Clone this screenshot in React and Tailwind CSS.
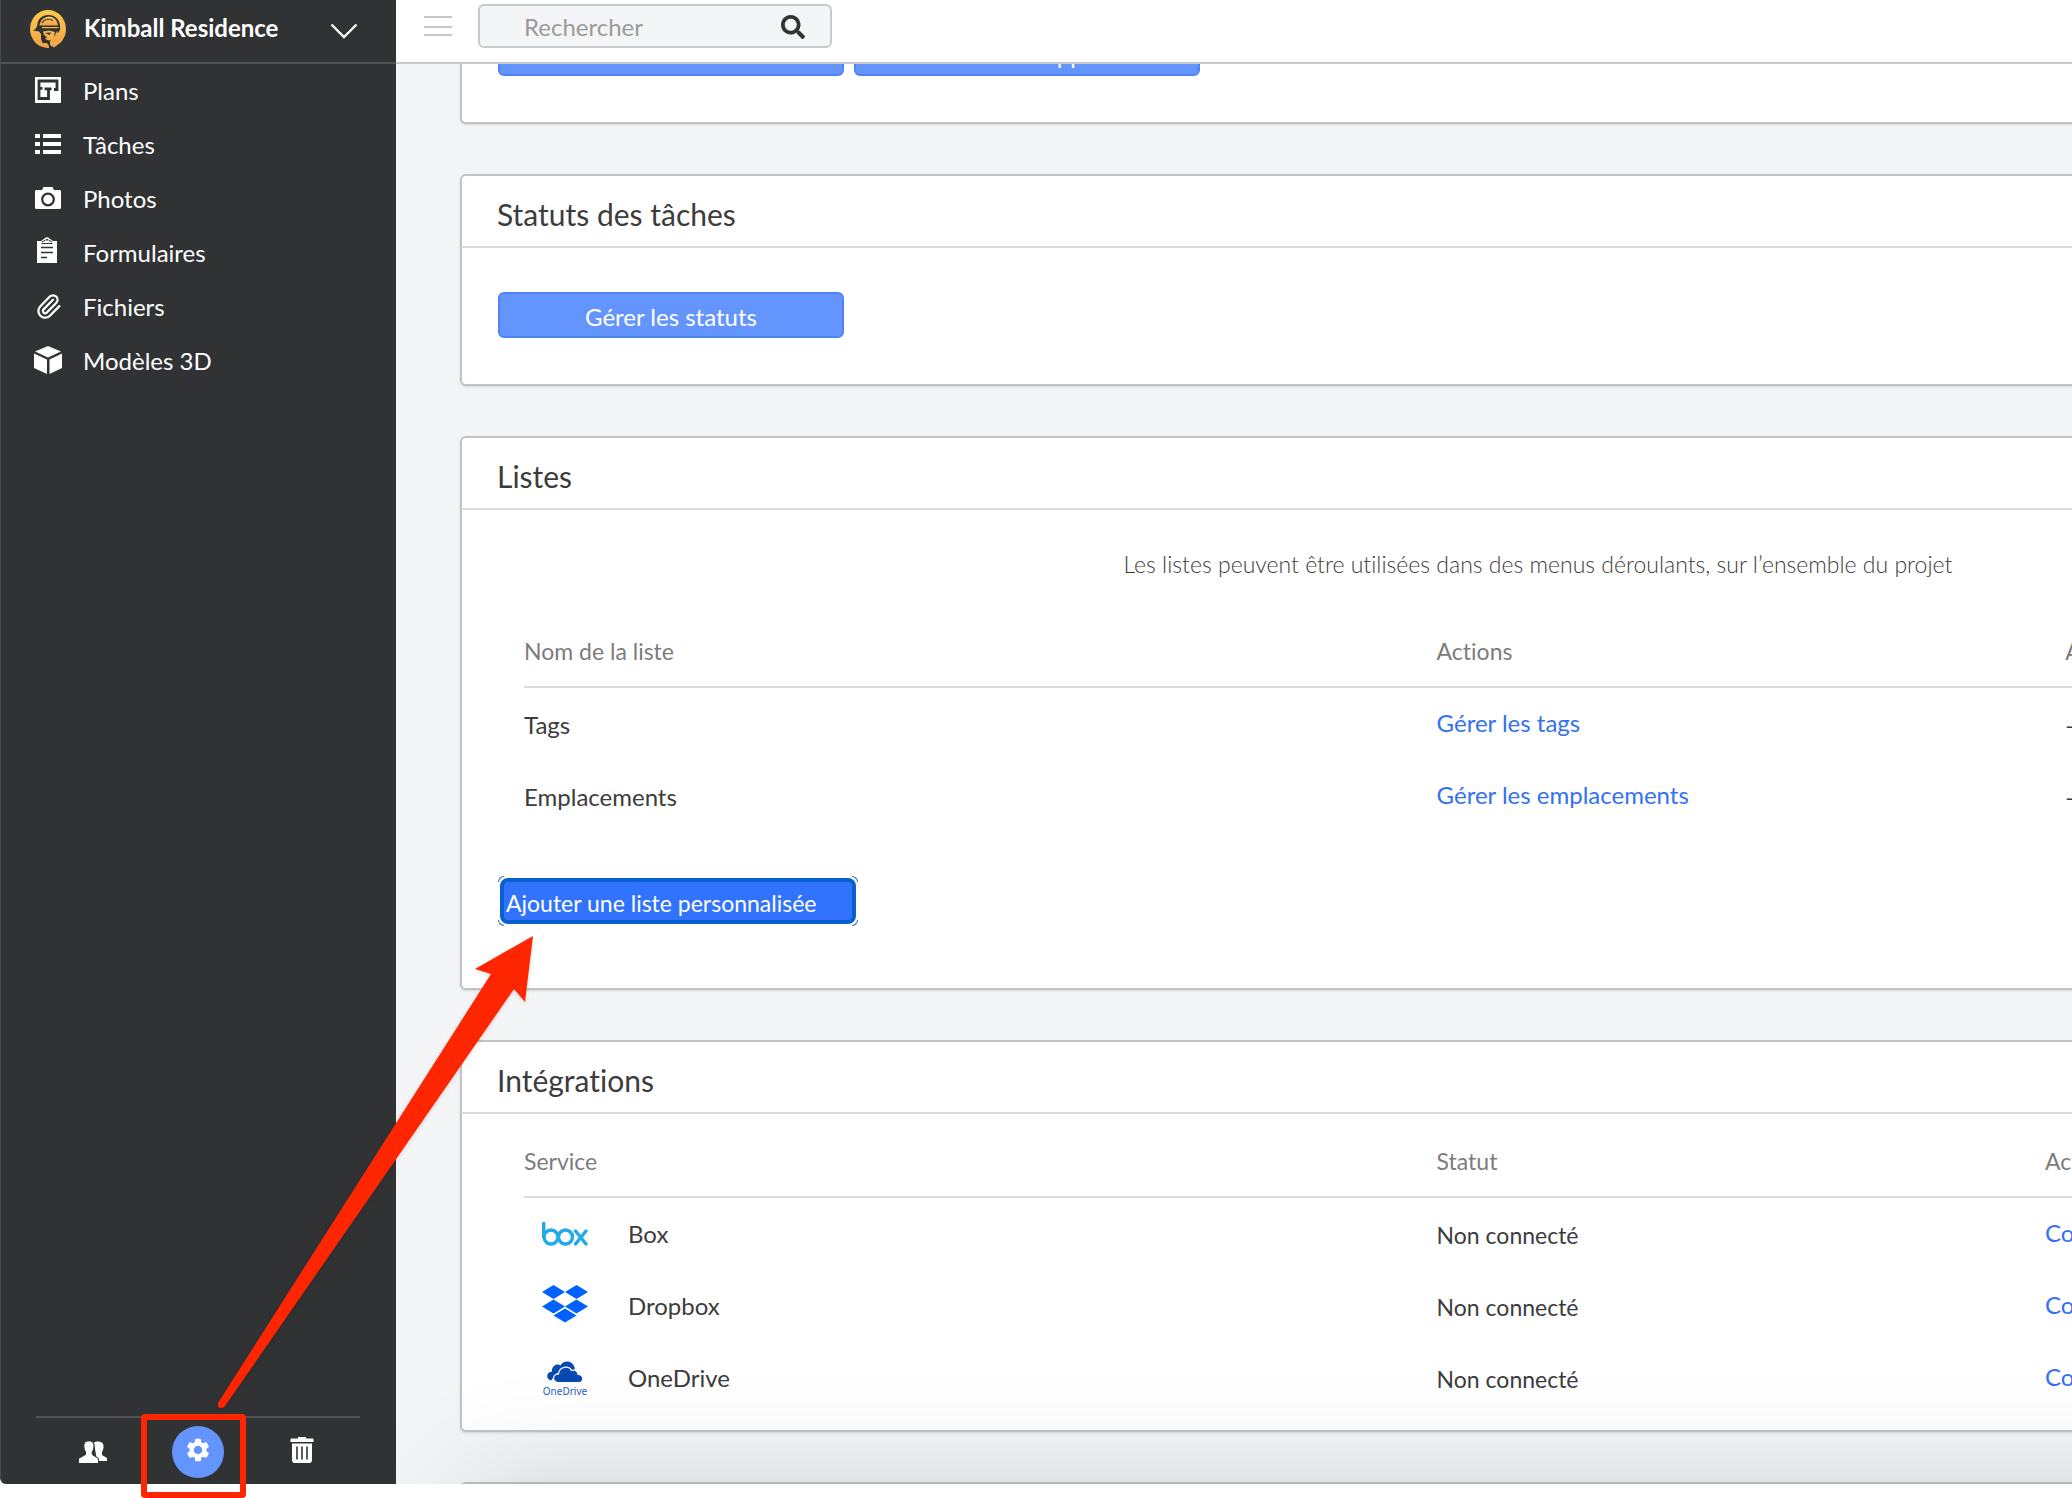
import { Paperclip } from "lucide-react";
import { FaSearch } from "react-icons/fa";
import { MdSettings } from "react-icons/md";

const navItems = [
  { label: "Plans", icon: PlansIcon },
  { label: "Tâches", icon: TasksIcon },
  { label: "Photos", icon: CameraIcon },
  { label: "Formulaires", icon: ClipboardIcon },
  { label: "Fichiers", icon: PaperclipIcon },
  { label: "Modèles 3D", icon: CubeIcon },
];

const lists = [
  { name: "Tags", action: "Gérer les tags" },
  { name: "Emplacements", action: "Gérer les emplacements" },
];

const services = [
  { name: "Box", logo: BoxLogo },
  { name: "Dropbox", logo: DropboxLogo },
  { name: "OneDrive", logo: OneDriveLogo },
];

function ProjectAvatar() {
  return (
    <svg viewBox="0 0 36 38" className="h-[38px] w-9" aria-hidden="true">
      <defs>
        <linearGradient id="avatar" x1="0" y1="0" x2="0" y2="1">
          <stop offset="0" stopColor="#fccb4f" />
          <stop offset="1" stopColor="#f3a048" />
        </linearGradient>
      </defs>
      <ellipse cx="18" cy="19" rx="18" ry="19" fill="url(#avatar)" />
      <path
        d="M3 20.5C6 19 7 17.500 7.500 13.500C8.500 8 13 5 18.500 5C25 5 29.500 9.500 30 15.500V20L28.500 22L26 28L31 35L28 38H19V36L17 33H12.500L11 29V24L9 21.500Z"
        fill="#313234"
      />
      <path d="M9.500 15.500C10 10.500 13 7.500 18.500 6.500C24 6.500 27.500 10.500 28 15.500Z" fill="url(#avatar)" />
      <path d="M12 13C13.500 9.500 18 8 23 10.500" fill="none" stroke="#313234" strokeWidth="1.200" />
      <path d="M12 17.600H28.500" stroke="#f8b84a" strokeWidth="1.200" />
      <path d="M13 21.500L19 20.500L25 22L23 29L19 30.500L15 29L17 27L14 25Z" fill="#f7b249" />
      <path d="M15 23L21 22.500L19.500 25Z" fill="#313234" />
      <path d="M20 31L25 25L27 21L29 27L30 33L24 37.500L20 35Z" fill="#f5a948" />
    </svg>
  );
}

function PlansIcon() {
  return (
    <svg viewBox="0 0 26 26" className="size-[26px]" aria-hidden="true">
      <rect width="26" height="26" fill="#fff" />
      <path
        d="M19 12.500H22V4H4V21.500H13.500V11.500M9.500 11.800H16.500M5 11.300H7.500"
        fill="none"
        stroke="#313234"
        strokeWidth="2.800"
      />
    </svg>
  );
}

function TasksIcon() {
  return (
    <svg viewBox="0 0 26 20" className="h-5 w-[26px]" fill="#fff" aria-hidden="true">
      <path d="M0 0h5v4H0zM8 0h18v4H8zM0 8h5v4H0zM8 8h18v4H8zM0 16h5v4H0zM8 16h18v4H8z" />
    </svg>
  );
}

function CameraIcon() {
  return (
    <svg viewBox="0 0 26 22" className="h-[22px] w-[26px]" aria-hidden="true">
      <path d="M1 3H7L8.500 0H17.500L19 3H25L26 4V21L25 22H1L0 21V4Z" fill="#fff" />
      <circle cx="13" cy="12.500" r="5.800" fill="none" stroke="#313234" strokeWidth="2.200" />
    </svg>
  );
}

function ClipboardIcon() {
  return (
    <svg viewBox="0 0 20 26" className="mb-1 mr-[2px] h-[26px] w-5" aria-hidden="true">
      <path d="M0 4H4L7.500 1.500Q10 -1 12.500 1.500L16 4H20V26H0Z" fill="#fff" />
      <path d="M4.500 6.500H15.500M5 5L8.500 3M15 5L11.500 3" stroke="#313234" strokeWidth="1" />
      <circle cx="10" cy="2.800" r="1" fill="#313234" />
      <path d="M4 10.500H16M4 15.500H16M4 20.500H10" stroke="#313234" strokeWidth="1.400" />
    </svg>
  );
}

function PaperclipIcon() {
  return <Paperclip className="size-[27px] shrink-0" strokeWidth={2} aria-hidden="true" />;
}

function CubeIcon() {
  return (
    <svg viewBox="0 0 28 28" className="size-7" fill="#fff" aria-hidden="true">
      <path d="M14 0L27 5.500L14 11.500L1 5.500ZM0 7.500L13 13.500V28L0 22ZM28 7.500L15.500 13.500V28L28 22Z" />
    </svg>
  );
}

function PeopleIcon() {
  return (
    <svg viewBox="0 0 28 22" className="h-[22px] w-7" aria-hidden="true">
      <path d="M15 1.500C17 0 21 0 23.500 2C25 4 25 8 23 11V14L28 17V20H18Z" fill="#fff" />
      <path
        d="M6.500 11C4.500 8 4.500 3.500 5.500 1.800C7.500 -0.800 12.500 -0.800 14.200 1.800C15.500 3.500 15.200 8 13.200 11V13.500L19.500 17.500V22.500H-0.500V17.500L6.500 13.500Z"
        fill="#fff"
        stroke="#313234"
        strokeWidth="1"
      />
    </svg>
  );
}

function TrashIcon() {
  return (
    <svg viewBox="0 0 24 26" className="h-[26px] w-6" aria-hidden="true">
      <path d="M8 0H16V1.500H23Q24 2 23.500 5H.5Q0 2 1 1.500H8ZM2 6.500H22V24L20.500 26H3.500L2 24Z" fill="#fff" />
      <path d="M7 9.500V22.500M12 9.500V22.500M17 9.500V22.500" stroke="#313234" strokeWidth="1.600" />
    </svg>
  );
}

function BoxLogo() {
  return (
    <svg viewBox="0 0 46 24" className="h-6 w-[46px]" fill="none" stroke="#21a9e8" strokeWidth="3.400" aria-hidden="true">
      <path d="M1.700 1.500V15" strokeLinecap="round" />
      <circle cx="9" cy="15" r="7" />
      <circle cx="23.500" cy="15" r="7" />
      <path d="M33.500 9L44 22M44 9L33.500 22" strokeLinecap="round" />
    </svg>
  );
}

function DropboxLogo() {
  return (
    <svg viewBox="0 0 46 38" className="mb-1 h-[38px] w-[46px]" fill="#0061ff" aria-hidden="true">
      <path d="M11.500 0L23 7L11.500 14L0 7ZM34.500 0L46 7L34.500 14L23 7ZM11.500 14.500L23 21.500L11.500 28.500L0 21.500ZM34.500 14.500L46 21.500L34.500 28.500L23 21.500ZM23 23.500L34.500 30.500L23 37.500L11.500 30.500Z" />
    </svg>
  );
}

function OneDriveLogo() {
  return (
    <svg viewBox="0 0 46 35" className="h-[35px] w-[46px]" aria-hidden="true">
      <path d="M9 19.500C3.500 18 4 11 10 10.500C9.500 5 15 2 18.500 4.500C21 -1 30 -1 32.500 6L33 12H15Z" fill="#094ab2" />
      <path
        d="M16 21.500C9.500 21 10.500 13 16.500 13C17 5.500 27 4 29.500 9.500C33.500 8 36 11 36 13.500C42.500 14 42 21.500 37 21.500Z"
        fill="#094ab2"
        stroke="#fff"
        strokeWidth="1.200"
      />
      <text x="23" y="34" textAnchor="middle" fontSize="10" fontFamily="Noto Sans, sans-serif" fill="#2a5fc0">
        OneDrive
      </text>
    </svg>
  );
}

function Sidebar() {
  return (
    <aside className="flex w-[396px] shrink-0 flex-col rounded-bl-md border-l border-[#47484a] bg-[#313234] text-white">
      <button
        type="button"
        className="flex h-16 shrink-0 items-center border-b-2 border-[#505153] pr-[38px] pb-1 pl-[29px] text-left font-bold"
      >
        <ProjectAvatar />
        <span className="ml-[18px] flex-1 pb-[2px]">Kimball Residence</span>
        <svg viewBox="0 0 28 16" className="mt-1 h-4 w-7" aria-hidden="true">
          <path d="M1.500 1.500L14 14L26.500 1.500" fill="none" stroke="#fff" strokeWidth="2.400" />
        </svg>
      </button>

      <nav className="flex-1">
        {navItems.map(({ label, icon: Icon }) => (
          <a key={label} href="#" className="flex h-[54px] items-center pl-[33px]">
            <span className="flex w-7 justify-center pb-[2px]">
              <Icon />
            </span>
            <span className="ml-[21px]">{label}</span>
          </a>
        ))}
      </nav>

      <div className="mr-9 ml-[35px] flex h-[68px] items-start border-t-2 border-[#505153] pt-2">
        <button type="button" aria-label="Utilisateurs" className="flex h-[52px] w-[113px] items-center justify-center">
          <PeopleIcon />
        </button>
        <div className="relative mx-[23px]">
          <button
            type="button"
            aria-label="Paramètres"
            className="flex size-[52px] items-center justify-center rounded-full bg-[#6495fe] pb-1"
          >
            <MdSettings className="size-7" />
          </button>
          <span className="pointer-events-none absolute -top-3 -left-[31px] z-20 h-[84px] w-[105px] rounded-sm border-[6px] border-[#fe2600]" />
        </div>
        <button type="button" aria-label="Corbeille" className="flex h-[52px] w-[110px] items-center justify-center pb-1">
          <TrashIcon />
        </button>
      </div>
    </aside>
  );
}

function TopBar() {
  return (
    <header className="flex h-16 shrink-0 items-start border-b-2 border-[#c9c9c9] bg-white pt-1 pl-7">
      <button type="button" aria-label="Menu" className="mt-3">
        <svg viewBox="0 0 28 20" className="h-5 w-7" fill="#c8c8c8" aria-hidden="true">
          <path d="M0 0h28v2H0zM0 10h28v2H0zM0 18h28v2H0z" />
        </svg>
      </button>
      <label className="ml-[26px] flex h-11 w-[354px] items-center rounded-md border-2 border-[#c8c8c8] bg-[#f4f5f7] pt-[2px] pr-[25px] pl-11">
        <input
          type="search"
          aria-label="Rechercher"
          placeholder="Rechercher"
          className="min-w-0 flex-1 bg-transparent outline-none placeholder:text-[#9b9b9b]"
        />
        <FaSearch className="size-6 text-[#333]" />
      </label>
    </header>
  );
}

function Card({ title, children, className = "" }) {
  return (
    <section className={`shrink-0 rounded-md border-2 border-[#c3c3c5] bg-white shadow-sm ${className}`}>
      {title && (
        <h2 className="flex h-[72px] items-center border-b-2 border-[#dcdcde] pt-[6px] pl-[35px] text-3xl text-[#3c3c3c]">
          {title}
        </h2>
      )}
      {children}
    </section>
  );
}

function PrimaryButton({ children }) {
  return (
    <button
      type="button"
      className="h-[46px] w-[346px] rounded-md border-2 border-[#4d83f7] bg-[#6495fe] pt-1 text-white"
    >
      {children}
    </button>
  );
}

function HeadCell({ children, className = "" }) {
  return (
    <th className={`h-[72px] border-b-2 border-[#dcdcde] p-0 text-[23px] font-normal text-[#7c7c7c] ${className}`}>
      {children}
    </th>
  );
}

// little arcs that show at the corners of the focused button
function FocusCorners() {
  return (
    <>
      <span className="absolute -top-[6px] -left-[6px] size-[6px] rounded-tl-md border-t border-l border-[#3d63c9]" />
      <span className="absolute -top-[6px] -right-[6px] size-[6px] rounded-tr-md border-t border-r border-[#3d63c9]" />
      <span className="absolute -bottom-[6px] -left-[6px] size-[6px] rounded-bl-md border-b border-l border-[#3d63c9]" />
      <span className="absolute -right-[6px] -bottom-[6px] size-[6px] rounded-br-md border-r border-b border-[#3d63c9]" />
    </>
  );
}

export default function App() {
  return (
    <div className="h-screen overflow-hidden bg-white pb-[14px] font-[Lato,sans-serif] text-2xl text-[#3c3c3c] [font-variant-ligatures:none]">
      <div className="relative flex h-full">
        <Sidebar />

        <div className="flex min-w-0 flex-1 flex-col">
          <TopBar />
          <main className="relative flex-1 overflow-hidden bg-[#f4f5f7]">
            {/* settings are scrolled down, the first card is mostly under the top bar */}
            <div className="-mt-[34px] flex min-w-[2284px] flex-col gap-[50px] px-16">
              <Card className="flex gap-[10px] border-t-0 pb-[46px] pl-9">
                <PrimaryButton>Modifier les informations</PrimaryButton>
                <PrimaryButton>Créer un rapport</PrimaryButton>
              </Card>

              <Card title="Statuts des tâches">
                <div className="px-9 pt-11 pb-[46px]">
                  <PrimaryButton>Gérer les statuts</PrimaryButton>
                </div>
              </Card>

              <Card title="Listes">
                <p className="pt-[38px] text-center text-[23px] leading-8 font-light">
                  Les listes peuvent être utilisées dans des menus déroulants, sur l’ensemble du projet
                </p>
                <div className="mx-[62px] mt-9">
                  <table className="w-full table-fixed border-separate border-spacing-0 text-left">
                    <thead>
                      <tr>
                        <HeadCell className="w-[45%]">Nom de la liste</HeadCell>
                        <HeadCell className="w-[31%]">Actions</HeadCell>
                        <HeadCell>Application</HeadCell>
                      </tr>
                    </thead>
                    <tbody>
                      {lists.map((list) => (
                        <tr key={list.name} className="h-[72px]">
                          <td className="p-0 pt-[2px]">{list.name}</td>
                          <td className="p-0 pb-[2px]">
                            <a href="#" className="text-[#3371f2]">
                              {list.action}
                            </a>
                          </td>
                          <td className="p-0 pt-[2px]">—</td>
                        </tr>
                      ))}
                    </tbody>
                  </table>
                </div>
                <button
                  type="button"
                  className="relative mt-[46px] mb-16 ml-[38px] block h-[46px] w-[356px] rounded-lg border-4 border-[#085fd0] bg-[#3273fe] pt-[5px] pl-[2px] text-left text-[23px] text-white"
                >
                  Ajouter une liste personnalisée
                  <FocusCorners />
                </button>
              </Card>

              <Card title="Intégrations">
                <div className="mx-[62px] pt-3 pb-4">
                  <table className="w-full table-fixed border-separate border-spacing-0 text-left">
                    <thead>
                      <tr>
                        <HeadCell className="w-[45%]">Service</HeadCell>
                        <HeadCell className="w-[30%]">Statut</HeadCell>
                        <HeadCell>Actions</HeadCell>
                      </tr>
                    </thead>
                    <tbody>
                      {services.map(({ name, logo: Logo }) => (
                        <tr key={name} className="h-[72px]">
                          <td className="p-0">
                            <span className="flex items-center gap-10 pl-[18px]">
                              <Logo />
                              {name}
                            </span>
                          </td>
                          <td className="p-0 pt-[2px] text-[23px]">Non connecté</td>
                          <td className="p-0 pb-[2px]">
                            <a href="#" className="text-[#3371f2]">
                              Connecter
                            </a>
                          </td>
                        </tr>
                      ))}
                    </tbody>
                  </table>
                </div>
              </Card>

              <Card className="h-40" />
            </div>
            <div className="pointer-events-none absolute -right-40 -bottom-80 left-16 h-80 shadow-[0_0_120px_rgba(0,0,0,0.14)]" />
          </main>
        </div>

        {/* pointer from the settings button to the add-list button */}
        <svg
          viewBox="0 0 330 480"
          className="pointer-events-none absolute top-[932px] left-[212px] z-20 h-[480px] w-[330px] drop-shadow-sm"
          aria-hidden="true"
        >
          <path d="M321 4L263 37L279 42L6 471Q5 476 9 476Q12 476 13 474L302 57L313 70Z" fill="#fe2600" />
        </svg>
      </div>
    </div>
  );
}
